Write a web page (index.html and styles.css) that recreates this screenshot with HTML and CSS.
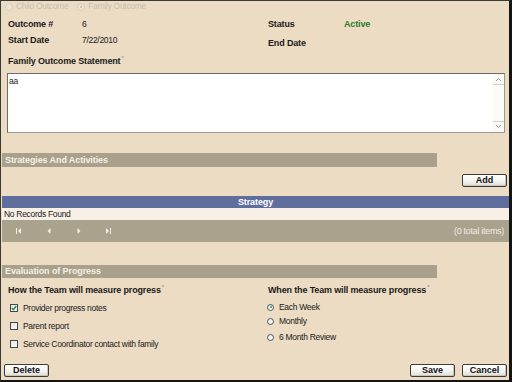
FILE: index.html
```html
<!DOCTYPE html>
<html>
<head>
<meta charset="utf-8">
<link rel="stylesheet" href="styles.css">
</head>
<body>
<div class="frame">
  <div class="type-row">
    <span class="opt"><span class="dis-radio"></span>Child Outcome</span>
    <span class="opt opt2"><span class="dis-radio on"></span>Family Outcome</span>
  </div>

  <div class="fields">
    <div class="col col-left">
      <div class="field"><span class="lbl">Outcome #</span><span class="val">6</span></div>
      <div class="field"><span class="lbl">Start Date</span><span class="val">7/22/2010</span></div>
    </div>
    <div class="col col-right">
      <div class="field"><span class="lbl">Status</span><span class="val active">Active</span></div>
      <div class="field"><span class="lbl">End Date</span><span class="val"></span></div>
    </div>
  </div>

  <div class="stmt-label">Family Outcome Statement<sup>*</sup></div>
  <div class="textbox">
    <div class="textbox-text">aa</div>
    <div class="scrollbar">
      <span class="sb-btn"><svg width="7" height="5" viewBox="0 0 7 5"><path d="M1 4 L3.5 1.5 L6 4" fill="none" stroke="#9a9a9a" stroke-width="1"/></svg></span>
      <span class="sb-btn"><svg width="7" height="5" viewBox="0 0 7 5"><path d="M1 1 L3.5 3.5 L6 1" fill="none" stroke="#9a9a9a" stroke-width="1"/></svg></span>
    </div>
  </div>

  <div class="bar bar-strat">Strategies And Activities</div>
  <div class="add-row"><button class="btn">Add</button></div>

  <div class="grid">
    <div class="grid-head">Strategy</div>
    <div class="grid-row">No Records Found</div>
    <div class="pager">
      <div class="pager-icons">
        <svg width="6" height="6" viewBox="0 0 6 6"><rect x="0" y="0" width="1" height="6" fill="#f2eee6"/><path d="M5 0 L2 3 L5 6 Z" fill="#f2eee6"/></svg>
        <svg width="4" height="6" viewBox="0 0 4 6"><path d="M3.5 0 L0.5 3 L3.5 6 Z" fill="#f2eee6"/></svg>
        <svg width="4" height="6" viewBox="0 0 4 6"><path d="M0.5 0 L3.5 3 L0.5 6 Z" fill="#f2eee6"/></svg>
        <svg width="6" height="6" viewBox="0 0 6 6"><path d="M1 0 L4 3 L1 6 Z" fill="#f2eee6"/><rect x="5" y="0" width="1" height="6" fill="#f2eee6"/></svg>
      </div>
      <div class="pager-info">(0 total items)</div>
    </div>
  </div>

  <div class="bar bar-eval">Evaluation of Progress</div>

  <div class="eval">
    <div class="eval-col eval-left">
      <div class="eval-title">How the Team will measure progress<sup>*</sup></div>
      <div class="checks">
        <div class="chk-row"><span class="chk checked"><svg width="6" height="6" viewBox="0 0 6 6"><path d="M0.8 3 L2.4 4.7 L5.3 1" fill="none" stroke="#2f8a2f" stroke-width="1.4"/></svg></span>Provider progress notes</div>
        <div class="chk-row"><span class="chk"></span>Parent report</div>
        <div class="chk-row"><span class="chk"></span>Service Coordinator contact with family</div>
      </div>
    </div>
    <div class="eval-col eval-right">
      <div class="eval-title">When the Team will measure progress<sup>*</sup></div>
      <div class="radios">
        <div class="rad-row r1"><span class="rad on"></span>Each Week</div>
        <div class="rad-row r2"><span class="rad"></span>Monthly</div>
        <div class="rad-row r3"><span class="rad"></span>6 Month Review</div>
      </div>
    </div>
  </div>

  <div class="footer">
    <button class="btn">Delete</button>
    <div class="footer-right">
      <button class="btn">Save</button>
      <button class="btn">Cancel</button>
    </div>
  </div>
</div>
</body>
</html>
```

FILE: styles.css
```css
html, body {
  margin: 0;
  padding: 0;
  background: #ecdcc4;
}
.frame {
  width: 512px;
  height: 382px;
  box-sizing: border-box;
  border-top: 1px solid #3c3a36;
  border-left: 1px solid #3c3a36;
  border-right: 3px solid #141414;
  border-bottom: 2px solid #141414;
  background: #ecdcc4;
  display: flex;
  flex-direction: column;
  font-family: "Liberation Sans", Arial, sans-serif;
  font-size: 8.5px;
  letter-spacing: -0.3px;
  color: #1a1a1a;
}
sup {
  font-size: 6px;
  vertical-align: top;
  line-height: 6px;
  color: #888;
  font-weight: normal;
  margin-left: 1px;
}
.type-row {
  height: 11px;
  line-height: 11px;
  display: flex;
  padding-left: 4px;
  color: #cbbfae;
}
.opt {
  display: flex;
  align-items: center;
}
.opt2 { margin-left: 9px; }
.dis-radio {
  width: 6px;
  height: 6px;
  border-radius: 50%;
  border: 1px solid #d8ccbb;
  background: #efe4d4;
  margin-right: 3px;
  position: relative;
}
.dis-radio.on::after {
  content: "";
  position: absolute;
  left: 2px;
  top: 2px;
  width: 2px;
  height: 2px;
  border-radius: 50%;
  background: #c9bca8;
}
.fields {
  display: flex;
  margin-top: 4px;
}
.col {
  display: flex;
  flex-direction: column;
}
.col-left {
  width: 267px;
  box-sizing: border-box;
  padding-left: 7px;
  flex-shrink: 0;
}
.col-right { gap: 3px; }
.field {
  height: 16px;
  line-height: 16px;
  display: flex;
}
.lbl {
  font-weight: bold;
  font-size: 9px;
  letter-spacing: -0.15px;
  width: 74px;
}
.col-right .lbl { width: 76px; }
.active {
  color: #2a7d2a;
  font-weight: bold;
  font-size: 9px;
  letter-spacing: -0.15px;
}
.stmt-label {
  margin-top: 4px;
  height: 12px;
  line-height: 12px;
  padding-left: 7px;
  font-weight: bold;
  font-size: 9px;
  letter-spacing: -0.15px;
}
.textbox {
  margin-top: 6px;
  margin-left: 6px;
  width: 498px;
  height: 60px;
  box-sizing: border-box;
  border: 1px solid #9a9892;
  border-top-color: #6e6c68;
  border-left-color: #6e6c68;
  background: #fff;
  display: flex;
}
.textbox-text {
  flex: 1;
  padding: 2px 1px;
  line-height: 10px;
}
.scrollbar {
  width: 11px;
  background: #fbfaf6;
  display: flex;
  flex-direction: column;
  justify-content: space-between;
  padding: 1px 0;
}
.sb-btn {
  height: 9px;
  display: flex;
  align-items: center;
  justify-content: center;
  border-bottom: 1px solid #d4d0c8;
}
.sb-btn:last-child {
  border-bottom: none;
  border-top: 1px solid #d4d0c8;
}
.bar {
  margin-left: 1px;
  width: 435px;
  background: #a9a18b;
  color: #f4f0e8;
  font-weight: bold;
  font-size: 9px;
  letter-spacing: -0.1px;
  padding-left: 3px;
  box-sizing: border-box;
}
.bar-strat {
  margin-top: 20px;
  height: 14px;
  line-height: 14px;
}
.add-row {
  margin-top: 7px;
  display: flex;
  justify-content: flex-end;
  padding-right: 2px;
}
.btn {
  width: 45px;
  height: 13px;
  padding: 0;
  box-sizing: border-box;
  border: 1px solid #3c3c3c;
  border-radius: 2px;
  background: linear-gradient(#ffffff, #f2f2ee 60%, #dedbd2);
  box-shadow: inset -1px -1px 0 #c9c5bb;
  font-family: "Liberation Sans", Arial, sans-serif;
  font-size: 9px;
  letter-spacing: 0;
  font-weight: bold;
  color: #111;
  line-height: 11px;
}
.grid {
  margin-top: 9px;
  margin-left: 1px;
}
.grid-head {
  height: 12px;
  line-height: 12px;
  background: #5f6e9c;
  color: #fff;
  font-weight: bold;
  font-size: 9px;
  letter-spacing: -0.1px;
  text-align: center;
}
.grid-row {
  height: 12px;
  line-height: 12px;
  background: #f8efe6;
  padding-left: 2px;
}
.pager {
  height: 22px;
  background: #a9a28c;
  display: flex;
  align-items: center;
  justify-content: space-between;
  padding-right: 5px;
  color: #f0ebe2;
  font-size: 9px;
}
.pager-icons {
  display: flex;
  align-items: center;
  padding-left: 14px;
}
.pager-icons svg:nth-child(2) { margin-left: 25px; }
.pager-icons svg:nth-child(3) { margin-left: 26px; }
.pager-icons svg:nth-child(4) { margin-left: 24px; }
.bar-eval {
  margin-top: 23px;
  height: 13px;
  line-height: 13px;
}
.eval {
  display: flex;
}
.eval-left {
  width: 267px;
  box-sizing: border-box;
  padding-left: 7px;
  flex-shrink: 0;
}
.eval-right {
  flex: 1;
}
.eval-title {
  margin-top: 6px;
  height: 12px;
  line-height: 12px;
  font-weight: bold;
  font-size: 9px;
  letter-spacing: -0.15px;
}
.checks {
  margin-top: 6px;
  display: flex;
  flex-direction: column;
  gap: 6px;
}
.chk-row {
  height: 12px;
  line-height: 12px;
  display: flex;
  align-items: center;
  padding-left: 2px;
}
.chk {
  width: 8px;
  height: 8px;
  box-sizing: border-box;
  border: 1px solid #3e4a5c;
  background: linear-gradient(135deg, #e6e4dc, #fbfbf8);
  margin-right: 5px;
  display: flex;
  align-items: center;
  justify-content: center;
}
.radios {
  margin-top: 5px;
  display: flex;
  flex-direction: column;
}
.rad-row {
  height: 12px;
  line-height: 12px;
  display: flex;
  align-items: center;
}
.r2 { margin-top: 2px; }
.r3 { margin-top: 4px; }
.rad {
  width: 7px;
  height: 7px;
  box-sizing: border-box;
  border-radius: 50%;
  border: 1px solid #4a5666;
  background: linear-gradient(135deg, #e6e4dc, #fff);
  margin-left: -1px;
  margin-right: 5px;
  position: relative;
}
.rad.on::after {
  content: "";
  position: absolute;
  left: 1.5px;
  top: 1.5px;
  width: 2px;
  height: 2px;
  border-radius: 50%;
  background: #2a9a2a;
}
.footer {
  margin-top: auto;
  margin-bottom: 3px;
  display: flex;
  justify-content: space-between;
  padding-left: 3px;
  padding-right: 2px;
}
.footer-right {
  display: flex;
  gap: 7px;
}
```
